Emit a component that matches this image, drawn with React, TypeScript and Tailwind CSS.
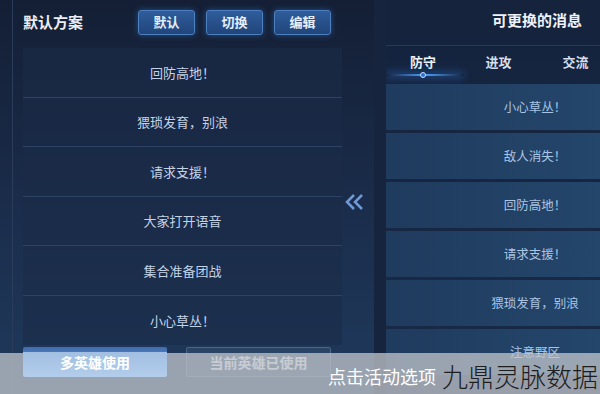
import React from 'react';

const leftItems = ['回防高地！', '猥琐发育，别浪', '请求支援！', '大家打开语音', '集合准备团战', '小心草丛！'];
const rightItems = ['小心草丛！', '敌人消失！', '回防高地！', '请求支援！', '猥琐发育，别浪', '注意野区'];
const tabs = ['防守', '进攻', '交流'];

const TopButton: React.FC<{ label: string }> = ({ label }) => (
  <div className="w-[57px] h-[25px] flex items-center justify-center rounded-[3px] border border-[#4a7fc0] bg-gradient-to-b from-[#2f5d9c] to-[#21457a] text-[13px] font-bold text-[#e6eef9] shadow-[0_0_6px_rgba(70,130,220,0.45)]">
    {label}
  </div>
);

const App: React.FC = () => {
  return (
    <div
      className="relative w-[600px] h-[394px] overflow-hidden bg-gradient-to-b from-[#141f35] via-[#1a2c4a] to-[#1f3a5c]"
      style={{ fontFamily: '"Noto Sans CJK SC", "Noto Sans", sans-serif' }}
    >
      <div className="flex h-full">
        {/* left panel */}
        <div className="flex-none w-[344px] pl-[12px] flex flex-col">
          <div className="h-full flex flex-col border-l border-[#2a3c5a] pl-[10px] pr-[2px]">
            <div className="h-[48px] flex items-center pb-[4px]">
              <span className="text-[15px] font-bold text-[#e9eef6] w-[115px]">默认方案</span>
              <div className="flex gap-[11px]">
                <TopButton label="默认" />
                <TopButton label="切换" />
                <TopButton label="编辑" />
              </div>
            </div>
            <div className="flex flex-col bg-[#1b2c47]/60">
              {leftItems.map((t, i) => (
                <div
                  key={t}
                  className={`h-[49.5px] flex items-center justify-center text-[13px] text-[#c4d2e6] ${i < leftItems.length - 1 ? 'border-b border-[#2c4366]' : ''}`}
                >
                  {t}
                </div>
              ))}
            </div>
            <div className="flex gap-[19px] mt-[2px]">
              {/* sits over the watermark band, colours already blended */}
              <div className="relative z-10 w-[144px] h-[30px] rounded-[2px] bg-[linear-gradient(to_bottom,#3e6cae_0%,#4a78b8_16%,#a2bfe2_18%,#b3cdeb_100%)] flex items-center justify-center text-[14px] font-bold text-white">
                多英雄使用
              </div>
              <div className="w-[145px] h-[30px] rounded-[2px] border border-[#4a6688] bg-[#2a4466] flex items-center justify-center text-[14px] font-bold text-[#d3dbe6]">
                当前英雄已使用
              </div>
            </div>
          </div>
        </div>

        {/* middle arrow */}
        <div className="flex-none w-[30px] flex items-center justify-center pt-[10px] pr-[8px]">
          <svg width="20" height="16" viewBox="0 0 20 16" fill="none">
            <path d="M9 1 L2 8 L9 15" stroke="#6e9bd8" strokeWidth="2.5" />
            <path d="M17 1 L10 8 L17 15" stroke="#6e9bd8" strokeWidth="2.5" />
          </svg>
        </div>

        {/* right panel */}
        <div className="flex-1 min-w-0 overflow-hidden flex flex-col bg-[#152540]/70 border-l-[12px] border-[#16253d]">
          <div className="h-[45px] flex items-center justify-end pr-[18px] pb-[4px]">
            <span className="text-[15px] font-bold text-[#eef2f8] whitespace-nowrap">可更换的消息</span>
          </div>
          <div className="relative h-[33px] flex items-center border-t border-[#263a58]">
            {tabs.map((t, i) => (
              <div key={t} className={`flex-none ${i === 0 ? 'w-[74px]' : 'w-[77px]'} text-center text-[13px] font-bold ${i === 0 ? 'text-[#eaf1fb]' : 'text-[#d6dfeb]'}`}>
                {t}
              </div>
            ))}
            <div className="absolute left-0 bottom-[2px] w-[78px] h-[2px] bg-gradient-to-r from-transparent via-[#4aa3ff] to-transparent shadow-[0_0_8px_#3b8cff]" />
            <div className="absolute left-[34px] bottom-[0px] w-[6px] h-[6px] rounded-full border border-[#bfe0ff] bg-[#2a6fd0]" />
          </div>
          <div className="flex flex-col gap-[3px] mt-[6px]">
            {rightItems.map(t => (
              <div key={t} className="h-[46px] flex items-center justify-end pr-[10px] bg-gradient-to-r from-[#1f3b5e] to-[#24466b] text-[12.5px] text-[#a9c4e4]">
                <span className="w-[110px] text-center whitespace-nowrap">{t}</span>
              </div>
            ))}
          </div>
        </div>
      </div>

      {/* watermark band */}
      <div className="absolute left-0 right-0 bottom-0 h-[41px] bg-[#c3c7cc]/75 flex items-center justify-end pr-[2px]">
        <span className="text-[18px] text-white mr-[6px] mt-[6px]">点击活动选项</span>
        <span className="text-[26px] font-light text-[#1e1e1e] mt-[4px]">九鼎灵脉数据</span>
      </div>
    </div>
  );
};

export default App;
